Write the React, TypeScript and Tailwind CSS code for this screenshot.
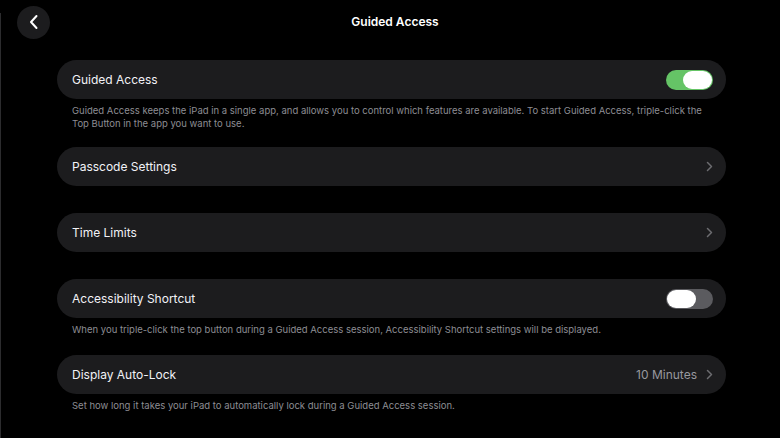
import React from 'react';

function Chevron() {
  return (
    <svg width="7" height="11" viewBox="0 0 7 11" fill="none" className="shrink-0">
      <path d="M1.5 1.5L5.5 5.5L1.5 9.5" stroke="#6c6c70" strokeWidth="1.5" strokeLinecap="round" strokeLinejoin="round" />
    </svg>
  );
}

function Toggle({ on }: { on: boolean }) {
  return (
    <div
      className={`flex h-[20px] w-[47px] items-center rounded-full p-[1px] ${
        on ? 'justify-end bg-[#65c466]' : 'justify-start bg-[#5b5b5f]'
      }`}
    >
      <div className="h-[18px] w-[29px] rounded-full bg-white" />
    </div>
  );
}

function Row({ label, children }: { label: string; children?: React.ReactNode }) {
  return (
    <div className="flex h-[39px] items-center justify-between rounded-full bg-[#1c1c1e] pl-[15px] pr-[13px]">
      <span className="text-[12px] text-[#f2f2f7]">{label}</span>
      {children}
    </div>
  );
}

function Footer({ children }: { children: React.ReactNode }) {
  return <p className="px-[15px] pt-[5px] text-[9.5px] leading-[13px] text-[#8d8d93]">{children}</p>;
}

export default function App() {
  return (
    <div className="flex h-[438px] w-[780px] overflow-hidden bg-black" style={{ fontFamily: 'Inter, "Noto Sans", sans-serif' }}>
      {/* split view edge */}
      <div className="mt-[13px] w-[1px] bg-[#2c2c2e]" />

      <div className="flex flex-1 flex-col">
        {/* Header */}
        <div className="flex h-[44px] items-center pl-[16px] pr-[48px]">
          <button className="flex h-[33px] w-[33px] items-center justify-center rounded-full bg-[#1c1c1e]">
            <svg width="12" height="16" viewBox="0 0 12 16" fill="none">
              <path d="M8.5 2L3 8L8.5 14" stroke="white" strokeWidth="2" strokeLinecap="round" strokeLinejoin="round" />
            </svg>
          </button>
          <h1 className="flex-1 pl-[8px] text-center text-[12px] font-semibold text-white">Guided Access</h1>
        </div>

        <div className="flex flex-col pl-[56px] pr-[54px] pt-[16px]">
          <Row label="Guided Access">
            <Toggle on />
          </Row>
          <Footer>
            Guided Access keeps the iPad in a single app, and allows you to control which features are available. To start Guided Access, triple-click the
            <br />
            Top Button in the app you want to use.
          </Footer>

          <div className="mt-[17px]">
            <Row label="Passcode Settings">
              <Chevron />
            </Row>
          </div>

          <div className="mt-[27px]">
            <Row label="Time Limits">
              <Chevron />
            </Row>
          </div>

          <div className="mt-[27px]">
            <Row label="Accessibility Shortcut">
              <Toggle on={false} />
            </Row>
          </div>
          <Footer>When you triple-click the top button during a Guided Access session, Accessibility Shortcut settings will be displayed.</Footer>

          <div className="mt-[19px]">
            <Row label="Display Auto-Lock">
              <div className="flex items-center gap-[9px]">
                <span className="text-[12px] text-[#98989f]">10 Minutes</span>
                <Chevron />
              </div>
            </Row>
          </div>
          <Footer>Set how long it takes your iPad to automatically lock during a Guided Access session.</Footer>
        </div>
      </div>
    </div>
  );
}
